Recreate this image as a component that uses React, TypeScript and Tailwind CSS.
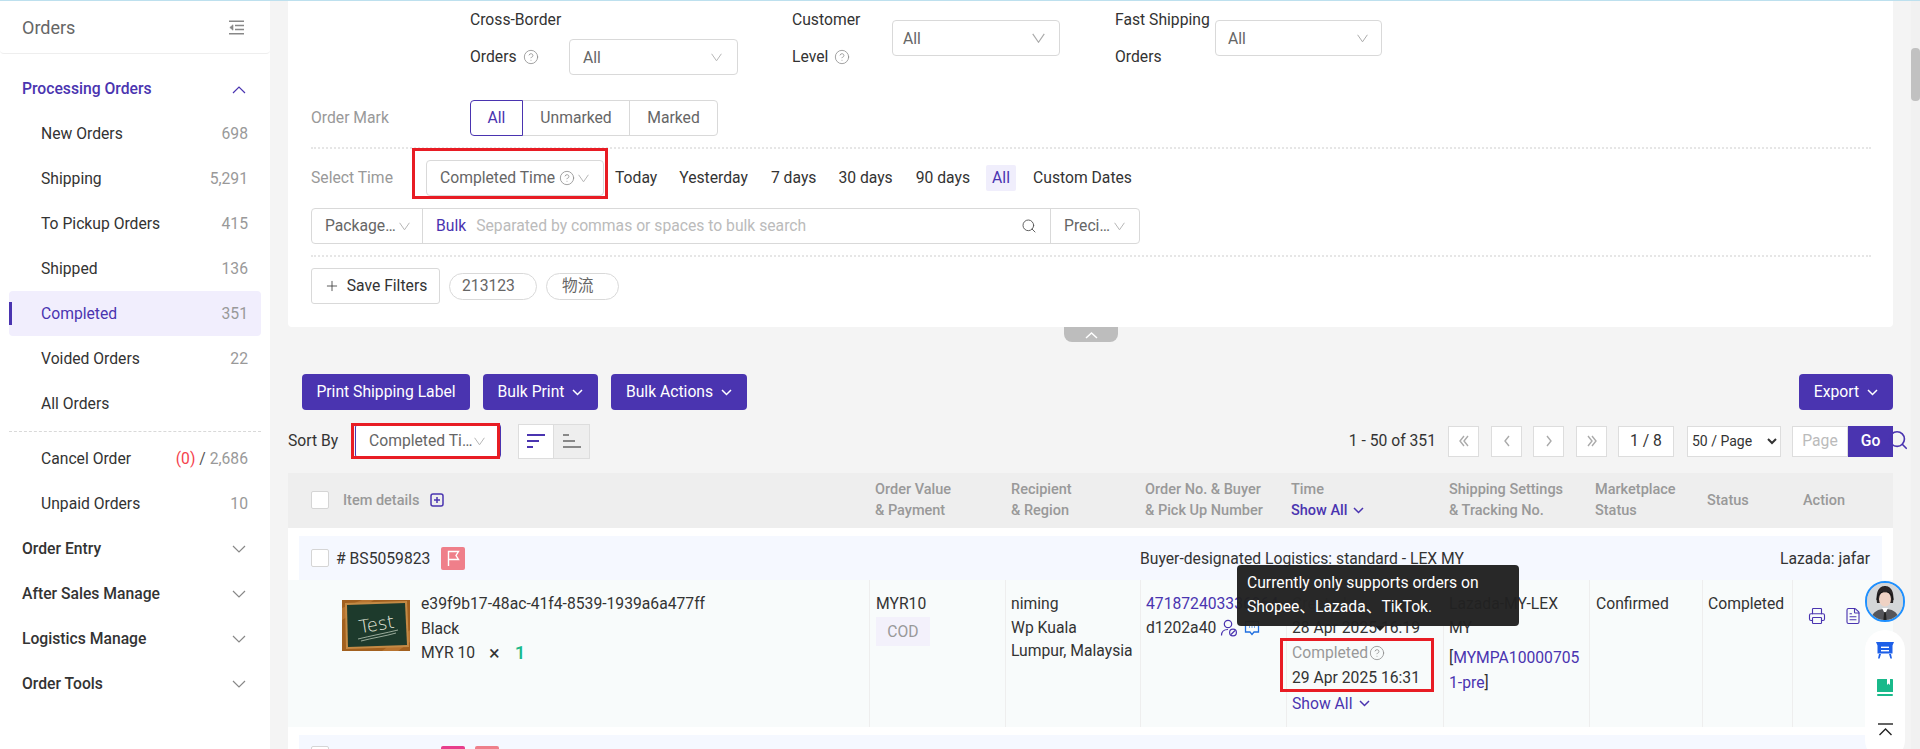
import React from "react";
import { CircleHelp, Search, Plus, Printer, FileText } from "lucide-react";

const Chev = ({ c = "#b5b5b5", w = 11 }: { c?: string; w?: number }) => (
  <svg width={w} height={w * 0.8} viewBox="0 0 11 9" fill="none" className="shrink-0">
    <path d="M0.5 0.8 L5.5 8 L10.5 0.8" stroke={c} strokeWidth="1" />
  </svg>
);
const SideChev = ({ up }: { up?: boolean }) => (
  <svg width="14" height="9" viewBox="0 0 14 9" fill="none">
    <path d={up ? "M1 8 L7 2 L13 8" : "M1 1 L7 7 L13 1"} stroke={up ? "#4a34b0" : "#888"} strokeWidth="1.2" />
  </svg>
);
const SmallChev = ({ c = "#fff" }: { c?: string }) => (
  <svg width="11" height="7" viewBox="0 0 11 7" fill="none" className="shrink-0">
    <path d="M1 1 L5.5 5.5 L10 1" stroke={c} strokeWidth="1.5" />
  </svg>
);
const Help = () => <CircleHelp size={16} strokeWidth={1.2} color="#8c8c8c" className="shrink-0" />;

const SideRow = ({ label, n, active }: { label: string; n?: React.ReactNode; active?: boolean }) => (
  <div className={`relative mx-[9px] flex h-[45px] items-center justify-between rounded pl-[32px] pr-[13px] ${active ? "bg-[#f1eefd] text-[#4a34b0]" : "text-[#333]"}`}>
    {active && <span className="absolute left-0 top-[11px] h-[23px] w-[3px] bg-[#4a34b0]" />}
    <span>{label}</span>
    <span className="text-[#999]">{n}</span>
  </div>
);
const SideGroup = ({ label }: { label: string }) => (
  <div className="flex h-[45px] items-center justify-between pl-[22px] pr-[24px] pt-px font-medium text-[#333]">
    <span>{label}</span>
    <SideChev />
  </div>
);

const Box = ({ children, className = "" }: { children: React.ReactNode; className?: string }) => (
  <div className={`flex h-[36px] items-center justify-between rounded border border-[#d9d9d9] bg-white text-[#666] ${className}`}>{children}</div>
);
const Dots = () => <div className="h-0 w-[1560px] border-t-2 border-dotted border-[#e6e6e6]" />;
const Red = ({ className }: { className: string }) => (
  <div className={`pointer-events-none absolute border-[3px] border-[#e81c24] ${className}`} />
);
const PrimaryBtn = ({ children, className = "" }: { children: React.ReactNode; className?: string }) => (
  <div className={`flex h-[36px] items-center justify-center gap-[8px] rounded-[4px] bg-[#4a34b0] text-white ${className}`}>{children}</div>
);
const PageBtn = ({ d, className = "" }: { d: string; className?: string }) => (
  <div className={`flex h-[31px] w-[31px] items-center justify-center border border-[#ddd] bg-white ${className}`}>
    <svg width="14" height="14" viewBox="0 0 14 14" fill="none"><path d={d} stroke="#aaa" strokeWidth="1.4" /></svg>
  </div>
);
const Check = () => <span className="block h-[18px] w-[18px] shrink-0 rounded-[2px] border border-[#d5d5d5] bg-white" />;
const FlagTag = ({ className = "bg-[#ef7f8a]" }: { className?: string }) => (
  <span className={`flex h-[23px] w-[24px] shrink-0 items-center justify-center rounded-[2px] ${className}`}>
    <svg width="13" height="17" viewBox="0 0 13 17" fill="none"><path d="M1.5 16V1.5H11.5L9 5.5L11.5 9.5H1.5" stroke="#fff" strokeWidth="1.4" /></svg>
  </span>
);

export default function App() {
  return (
    <div className="relative flex h-[749px] w-[1920px] overflow-hidden border-t border-[#bde0ee] bg-[#f4f4f4] [font-family:Roboto,Noto_Sans_CJK_SC,sans-serif] text-[15.7px] text-[#333]">
      {/* Sidebar */}
      <aside className="w-[270px] shrink-0 bg-white">
        <div className="flex h-[53px] items-center justify-between rounded-b border-b border-[#eee] pl-[22px] pr-[25px] text-[18px] text-[#666]">
          <span>Orders</span>
          <svg width="17" height="15" viewBox="0 0 17 15" fill="none" stroke="#888" strokeWidth="1.4">
            <path d="M1 1.2H16M7 5.5H16M7 9.5H16M1 13.8H16" />
            <path d="M5 4.8L1.8 7.5L5 10.2V4.8Z" fill="#888" strokeWidth="0.6" />
          </svg>
        </div>
        <div className="mt-[12px] flex h-[45px] items-center justify-between pl-[22px] pr-[24px] pt-px font-medium text-[#4a34b0]">
          <span>Processing Orders</span>
          <SideChev up />
        </div>
        <SideRow label="New Orders" n="698" />
        <SideRow label="Shipping" n="5,291" />
        <SideRow label="To Pickup Orders" n="415" />
        <SideRow label="Shipped" n="136" />
        <SideRow label="Completed" n="351" active />
        <SideRow label="Voided Orders" n="22" />
        <SideRow label="All Orders" />
        <div className="mx-[9px] mb-[4px] mt-[5px] border-t border-dashed border-[#d9d9d9]" />
        <SideRow label="Cancel Order" n={<><span className="text-[#f5424d]">(0)</span><span className="text-[#555]"> / </span>2,686</>} />
        <SideRow label="Unpaid Orders" n="10" />
        <SideGroup label="Order Entry" />
        <SideGroup label="After Sales Manage" />
        <SideGroup label="Logistics Manage" />
        <SideGroup label="Order Tools" />
      </aside>

      {/* Main */}
      <main className="ml-[18px] w-[1605px] shrink-0">
        <section className="h-[326px] rounded-b bg-white pl-[23px]">
          <div className="flex h-[74px] items-start leading-[37px]">
            <div className="ml-[159px] w-[99px]">
              <div>Cross-Border</div>
              <div className="flex items-center gap-[6px]">Orders <Help /></div>
            </div>
            <Box className="mt-[38px] w-[169px] pl-[13px] pr-[15px]"><span>All</span><Chev /></Box>
            <div className="ml-[54px] w-[100px]">
              <div>Customer</div>
              <div className="flex items-center gap-[6px]">Level <Help /></div>
            </div>
            <Box className="mt-[19px] w-[168px] pl-[10px] pr-[14px]"><span>All</span><Chev c="#aaa" w={13} /></Box>
            <div className="ml-[55px] w-[100px] whitespace-nowrap">
              <div>Fast Shipping</div>
              <div>Orders</div>
            </div>
            <Box className="mt-[19px] w-[167px] pl-[12px] pr-[13px]"><span>All</span><Chev c="#aaa" /></Box>
          </div>

          <div className="mt-[25px] flex h-[36px] items-center">
            <span className="w-[159px] text-[#999]">Order Mark</span>
            <div className="flex h-[36px] text-[#666]">
              <span className="z-10 flex w-[53px] items-center justify-center rounded-l border border-[#4a34b0] text-[#4a34b0]">All</span>
              <span className="-ml-px flex w-[108px] items-center justify-center border border-[#d9d9d9]">Unmarked</span>
              <span className="-ml-px flex w-[89px] items-center justify-center rounded-r border border-[#d9d9d9]">Marked</span>
            </div>
          </div>

          <div className="mt-[11px]"><Dots /></div>

          <div className="mt-[11px] flex h-[36px] items-center">
            <span className="w-[115px] text-[#999]">Select Time</span>
            <div className="relative">
              <Box className="w-[178px] pl-[13px] pr-[14px]">
                <span className="flex items-center gap-[4px] whitespace-nowrap">Completed Time <Help /></span>
                <Chev />
              </Box>
              <Red className="-left-[14px] -top-[12px] h-[51px] w-[196px]" />
            </div>
            <div className="flex items-center whitespace-nowrap text-[#333]">
              <span className="ml-[11px]">Today</span>
              <span className="ml-[22px]">Yesterday</span>
              <span className="ml-[23px]">7 days</span>
              <span className="ml-[22px]">30 days</span>
              <span className="ml-[23px]">90 days</span>
              <span className="ml-[16px] flex h-[26px] w-[30px] items-center justify-center rounded-[2px] bg-[#f0eefc] text-[#4a34b0]">All</span>
              <span className="ml-[17px]">Custom Dates</span>
            </div>
          </div>

          <div className="mt-[12px] flex h-[36px] w-[829px] items-stretch rounded border border-[#d9d9d9] text-[#666]">
            <div className="flex w-[111px] items-center gap-[3px] border-r border-[#d9d9d9] pl-[13px]"><span>Package…</span><Chev /></div>
            <div className="flex flex-1 items-center pl-[13px]">
              <span className="text-[#4a34b0]">Bulk</span>
              <span className="ml-[10px] text-[#bbb]">Separated by commas or spaces to bulk search</span>
              <Search size={16} strokeWidth={1.4} color="#555" className="ml-auto mr-[13px]" />
            </div>
            <div className="flex w-[89px] items-center justify-between border-l border-[#d9d9d9] pl-[13px] pr-[14px]"><span>Preci…</span><Chev /></div>
          </div>

          <div className="mt-[11px]"><Dots /></div>

          <div className="mt-[11px] flex h-[36px] items-center text-[#555]">
            <div className="flex h-[36px] w-[129px] items-center justify-center gap-[7px] rounded-[3px] border border-[#d9d9d9] text-[#333]">
              <Plus size={16} strokeWidth={1.2} /> Save Filters
            </div>
            <span className="ml-[9px] flex h-[27px] w-[88px] items-center rounded-full border border-[#d9d9d9] pl-[12px] text-[#666]">213123</span>
            <span className="ml-[9px] flex h-[27px] w-[73px] items-center rounded-full border border-[#d9d9d9] pl-[15px] text-[#666]">物流</span>
          </div>
        </section>

        <div className="ml-[776px] flex h-[15px] w-[54px] items-center justify-center rounded-b-lg bg-[#bdbdbd]">
          <svg width="13" height="8" viewBox="0 0 13 8" fill="none"><path d="M1 7L6.5 2L12 7" stroke="#fff" strokeWidth="1.5" /></svg>
        </div>

        <div className="mt-[32px] flex justify-between pl-[14px]">
          <div className="flex gap-[13px]">
            <PrimaryBtn className="w-[168px]">Print Shipping Label</PrimaryBtn>
            <PrimaryBtn className="w-[115px]">Bulk Print <SmallChev /></PrimaryBtn>
            <PrimaryBtn className="w-[136px]">Bulk Actions <SmallChev /></PrimaryBtn>
          </div>
          <PrimaryBtn className="w-[94px]">Export <SmallChev /></PrimaryBtn>
        </div>

        <div className="mt-[13px] flex h-[36px] items-center">
          <span className="w-[67px]">Sort By</span>
          <div className="relative">
            <div className="flex h-[36px] w-[146px] items-center justify-between whitespace-nowrap rounded border border-[#4a34b0] bg-white pl-[13px] pr-[15px] text-[#666]">
              <span>Completed Ti…</span><Chev />
            </div>
            <Red className="-left-[4px] top-0 h-[36px] w-[149px]" />
          </div>
          <div className="ml-[17px] flex h-[35px]">
            <div className="flex w-[36px] items-center justify-center border border-[#ddd] bg-white">
              <svg width="18" height="14" viewBox="0 0 18 14" fill="#4a34b0"><rect width="18" height="2" y="0" /><rect width="12" height="2" y="6" /><rect width="6" height="2" y="12" /></svg>
            </div>
            <div className="flex w-[36px] items-center justify-center border border-l-0 border-[#ddd] bg-[#eee]">
              <svg width="18" height="14" viewBox="0 0 18 14" fill="#888"><rect width="6" height="2" y="0" /><rect width="12" height="2" y="6" /><rect width="18" height="2" y="12" /></svg>
            </div>
          </div>
          <div className="relative ml-auto flex items-center">
            <span className="mr-[12px]">1 - 50 of 351</span>
            <PageBtn d="M7 2L3 7L7 12M11 2L7 7L11 12" className="mr-[12px]" />
            <PageBtn d="M9 2L5 7L9 12" className="mr-[11px]" />
            <PageBtn d="M5 2L9 7L5 12" className="mr-[12px]" />
            <PageBtn d="M3 2L7 7L3 12M7 2L11 7L7 12" className="mr-[11px]" />
            <div className="flex h-[31px] w-[56px] items-center justify-center border border-[#ddd] bg-white">1 / 8</div>
            <select className="ml-[13px] h-[31px] w-[94px] border border-[#ddd] bg-white text-[14px] text-[#333]"><option>50 / Page</option></select>
            <div className="ml-[11px] flex h-[31px] w-[56px] items-center justify-center border border-[#ddd] bg-white text-[#bbb]">Page</div>
            <div className="flex h-[31px] w-[45px] items-center justify-center bg-[#4a34b0] font-medium text-white">Go</div>
            <Search size={22} strokeWidth={1.8} color="#4a34b0" className="absolute -right-[16px] top-[3px] -z-0" />
          </div>
        </div>

        {/* Table head */}
        <div className="mt-[14px] grid h-[55px] grid-cols-[581px_136px_135px_146px_157px_146px_113px_90px_101px] items-center bg-[#eee] pb-px text-[14.5px] font-medium leading-[21px] text-[#999]">
          <div className="flex items-center pl-[23px]">
            <Check />
            <span className="ml-[14px]">Item details</span>
            <svg className="ml-[11px]" width="14" height="14" viewBox="0 0 14 14" fill="none" stroke="#4a34b0" strokeWidth="1.5"><rect x="1" y="1" width="12" height="12" rx="2" /><path d="M7 4V10M4 7H10" /></svg>
          </div>
          <div className="pl-[6px]">Order Value<br />&amp; Payment</div>
          <div className="pl-[6px]">Recipient<br />&amp; Region</div>
          <div className="whitespace-nowrap pl-[5px]">Order No. &amp; Buyer<br />&amp; Pick Up Number</div>
          <div className="pl-[5px]">Time<br /><span className="inline-flex items-center gap-[6px] text-[#4a34b0]">Show All <SmallChev c="#4a34b0" /></span></div>
          <div className="whitespace-nowrap pl-[6px]">Shipping Settings<br />&amp; Tracking No.</div>
          <div className="pl-[6px]">Marketplace<br />Status</div>
          <div className="pl-[5px]">Status</div>
          <div className="pl-[11px]">Action</div>
        </div>

        {/* Order */}
        <div className="bg-white pt-[8px]">
          <div className="mx-[11px] flex h-[44px] items-center bg-[#f5f8ff] pl-[12px] pr-[12px]">
            <Check />
            <span className="ml-[7px] w-[105px] whitespace-nowrap pt-px"># BS5059823</span>
            <FlagTag />
            <span className="ml-[675px] whitespace-nowrap pt-px">Buyer-designated Logistics: standard - LEX MY</span>
            <span className="ml-auto whitespace-nowrap pt-px">Lazada: jafar</span>
          </div>
          <div className="grid h-[147px] grid-cols-[581px_136px_135px_146px_157px_146px_113px_90px_101px] bg-[#f8fbfb]">
            <div className="flex pl-[54px] pt-[20px]">
              <svg width="68" height="51" viewBox="0 0 68 51" className="shrink-0">
                <rect width="68" height="51" fill="#a2601f" />
                <path d="M0 8L20 0H32L0 20ZM40 51L68 30V42L56 51Z" fill="#b87430" />
                <path d="M3 3L65 1L67 47L4 49Z" fill="#c48a45" />
                <path d="M5 5L63 3L65 45L6 47Z" fill="#1d3a2c" />
                <text x="17" y="31" fill="#e6e9de" fontSize="18" fontFamily="'DejaVu Sans', sans-serif" fontWeight="300" transform="rotate(-9 32 26)">Test</text>
                <path d="M16 39C28 36 44 33 56 30M19 41C30 38 44 36 54 33" stroke="#b9c6b6" strokeWidth="0.8" fill="none" />
              </svg>
              <div className="ml-[11px] -mt-[8px] whitespace-nowrap leading-[24.5px]">
                <div>e39f9b17-48ac-41f4-8539-1939a6a477ff</div>
                <div>Black</div>
                <div className="flex items-center">MYR 10<span className="ml-[14px] text-[20px] leading-none">×</span><span className="ml-[15px] text-[19px] font-medium text-[#19b98a]">1</span></div>
              </div>
            </div>
            <div className="border-l border-[#eee] pl-[6px] pt-[12px] leading-[24px]">
              <div>MYR10</div>
              <div className="mt-[1px] flex h-[29px] w-[54px] items-center justify-center bg-[#f3f1fb] text-[#999]">COD</div>
            </div>
            <div className="border-l border-[#eee] pl-[5px] pt-[12px] leading-[23.5px]">niming<br />Wp Kuala<br /><span className="whitespace-nowrap">Lumpur, Malaysia</span></div>
            <div className="overflow-hidden border-l border-[#eee] pl-[5px] pt-[12px] leading-[24px]">
              <div className="whitespace-nowrap text-[#4a34b0]">471872403336964</div>
              <div className="flex items-center whitespace-nowrap">d1202a40
                <svg className="ml-[4px]" width="18" height="18" viewBox="0 0 18 18" fill="none" stroke="#4a34b0" strokeWidth="1.2"><circle cx="8" cy="5" r="3.7" /><path d="M1.5 16.5c0-4 2.5-6 6.5-6" /><circle cx="13" cy="13.5" r="3.4" /><path d="M11 15.5l4-4" /></svg>
                <svg className="ml-[6px]" width="16" height="16" viewBox="0 0 16 16" fill="none" stroke="#1f6fe0" strokeWidth="1.3"><path d="M1.5 1.5H14.5V12H10L8 14.5L6 12H1.5Z" /><path d="M5 7H5.8M7.6 7H8.4M10.2 7H11" strokeWidth="1.6" /></svg>
              </div>
            </div>
            <div className="relative whitespace-nowrap border-l border-[#eee] pl-[5px] pt-[12px]">
              <div className="leading-[24px] text-[#999]">Created</div>
              <div className="leading-[24px]">28 Apr 2025 16:19</div>
              <div className="flex h-[25px] items-center gap-[1px] text-[#999]">Completed<Help /></div>
              <div className="h-[26px] leading-[26px]">29 Apr 2025 16:31</div>
              <div className="flex h-[25px] items-center gap-[7px] text-[#4a34b0]">Show All <SmallChev c="#4a34b0" /></div>
              <Red className="-left-[7px] top-[58px] h-[54px] w-[154px]" />
              <div className="absolute -left-[50px] -top-[15px] z-20 h-[61px] w-[282px] rounded-[4px] bg-[#212121]/[0.97] pl-[10px] pt-[6px] leading-[24px] text-white">
                <div>Currently only supports orders on</div>
                <div>Shopee、Lazada、TikTok.</div>
                <span className="absolute left-[138px] top-[61px] h-0 w-0 border-x-[5px] border-t-[5px] border-x-transparent border-t-[#212121]" />
              </div>
            </div>
            <div className="whitespace-nowrap border-l border-[#eee] pl-[5px] pt-[12px] leading-[24px]">
              <div>Lazada-MY-LEX</div>
              <div>MY</div>
              <div className="mt-[5px] leading-[25px]">[<span className="text-[#4a34b0]">MYMPA10000705<br />1-pre</span>]</div>
            </div>
            <div className="border-l border-[#eee] pl-[6px] pt-[12px] leading-[24px]">Confirmed</div>
            <div className="border-l border-[#eee] pl-[5px] pt-[12px] leading-[24px]">Completed</div>
            <div className="flex items-start gap-[18px] border-l border-[#eee] pl-[15px] pt-[27px]">
              <Printer size={18} strokeWidth={1.5} color="#4a34b0" />
              <FileText size={18} strokeWidth={1.5} color="#4a34b0" />
            </div>
          </div>
          <div className="mx-[11px] mt-[8px] flex h-[60px] items-start bg-[#f5f8ff] pl-[12px] pt-[11px]">
            <Check />
            <span className="ml-[112px] flex gap-[10px]"><FlagTag className="bg-[#e83e8c]" /><FlagTag /></span>
          </div>
        </div>
      </main>

      {/* Scrollbar */}
      <div className="ml-auto w-[9px] bg-[#f1f1f1] pt-[47px]">
        <div className="h-[53px] w-[9px] rounded-[4px] bg-[#c1c1c1]" />
      </div>

      {/* Floating helpers */}
      <div className="absolute left-[1865px] top-[580px] z-30 w-[40px]">
        <div className="h-[41px] w-[40px] overflow-hidden rounded-full border-2 border-[#1e90ff] bg-[#c9ccd0]">
          <svg width="36" height="37" viewBox="0 0 36 37">
            <rect width="36" height="37" fill="#d4d6d8" />
            <path d="M10 20C8 6 14 3 18 3S28 6 26 20Z" fill="#2a2526" />
            <ellipse cx="18" cy="16" rx="6" ry="7.5" fill="#efd2c4" />
            <path d="M4 37C5 28 12 26 18 26S31 28 32 37Z" fill="#55555a" />
            <path d="M15 25L18 31L21 25Z" fill="#fff" />
            <path d="M17.2 29H18.8L19.6 37H16.4Z" fill="#222" />
            <path d="M10 17C10 6 26 6 26 17" fill="none" stroke="#111" strokeWidth="1" />
          </svg>
        </div>
        <div className="mt-[8px] flex h-[130px] flex-col items-center rounded-[20px] bg-white pt-[11px]">
          <svg width="18" height="18" viewBox="0 0 18 18" fill="#1d5fe8">
            <path d="M0 1H18L16.5 4.5V12.5H1.5V4.5Z" />
            <rect x="5" y="5.6" width="8" height="1.4" fill="#fff" />
            <rect x="5" y="9" width="8" height="1.4" fill="#fff" />
            <path d="M3 13H5L3.6 17.5H2ZM13 13H15L16 17.5H14.4Z" />
          </svg>
          <svg className="mt-[20px]" width="16" height="18" viewBox="0 0 16 18" fill="#19b98a">
            <path d="M1 0H15C15.6 0 16 .4 16 1V13H0V1C0 .4 .4 0 1 0Z" />
            <path d="M10 0V6L11.5 4.6L13 6V0Z" fill="#fff" />
            <rect y="15" width="16" height="2" rx="1" />
          </svg>
          <svg className="mt-[26px]" width="15" height="13" viewBox="0 0 15 13" fill="none" stroke="#222" strokeWidth="1.4"><path d="M0 1H15" /><path d="M1.5 12L7.5 6L13.5 12" /></svg>
        </div>
      </div>
    </div>
  );
}
